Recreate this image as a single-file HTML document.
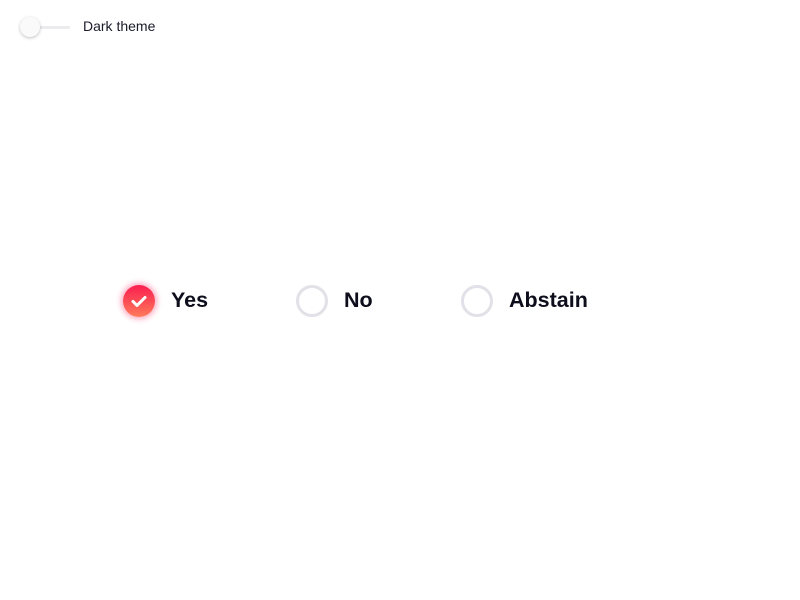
<!DOCTYPE html>
<html><head><style>
body{margin:0;width:800px;height:600px;background:#fff;font-family:"Liberation Sans",sans-serif;position:relative;overflow:hidden}
.track{position:absolute;left:22px;top:26px;width:48px;height:3px;background:#ececef;border-radius:2px}
.knob{position:absolute;left:20px;top:17px;width:20px;height:20px;border-radius:50%;background:#fafafa;box-shadow:0 1px 3px rgba(0,0,0,.25)}
.lbl{position:absolute;left:83px;top:18px;font-size:14px;color:#1a1a2a}
.r{position:absolute;width:26px;height:26px;border:3px solid #e1e1e7;border-radius:50%;top:285px}
.sel{position:absolute;left:123px;top:285px;width:32px;height:32px;border-radius:50%;background:linear-gradient(#fa1e50,#ff7a5a);box-shadow:0 0 6px 2px rgba(255,60,110,.45)}
.t{position:absolute;top:288px;font-size:21.5px;font-weight:bold;color:#0d0d1c}
</style></head><body>
<div class="track"></div><div class="knob"></div><div class="lbl">Dark theme</div>
<div class="sel"><svg width="32" height="32" viewBox="0 0 32 32"><path d="M10 16.5l4 4 8-8" fill="none" stroke="#fff" stroke-width="3" stroke-linecap="round" stroke-linejoin="round"/></svg></div>
<div class="t" style="left:171px">Yes</div>
<div class="r" style="left:296px"></div><div class="t" style="left:344px">No</div>
<div class="r" style="left:461px"></div><div class="t" style="left:509px">Abstain</div>
</body></html>
